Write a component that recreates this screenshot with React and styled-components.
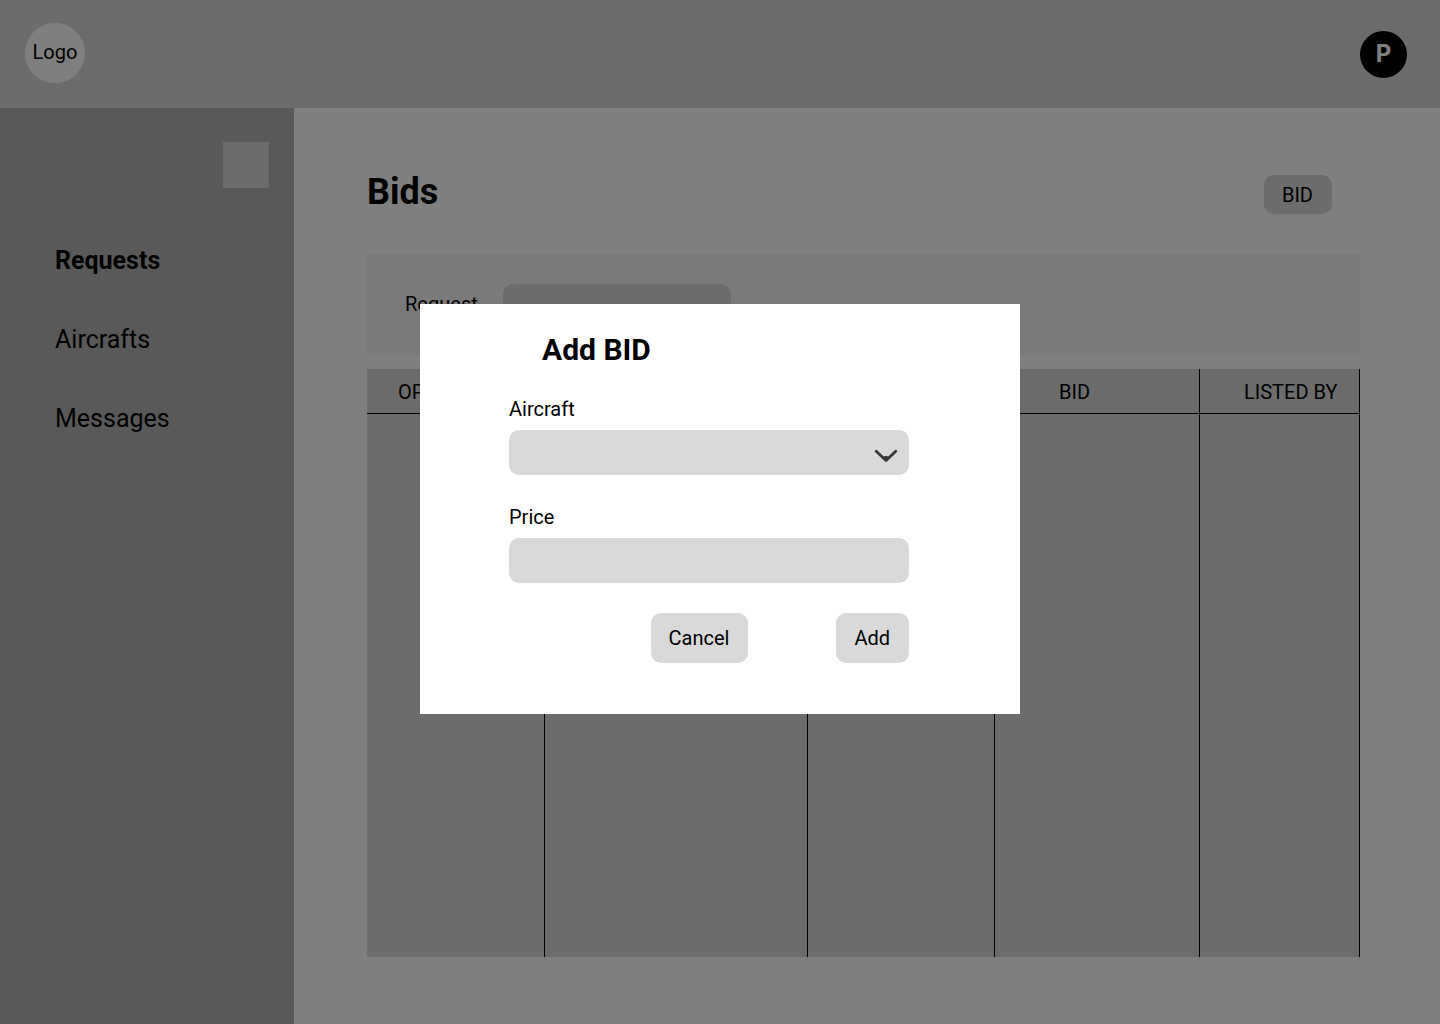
import React from "react";
import styled, { createGlobalStyle } from "styled-components";

const Global = createGlobalStyle`
  *, *::before, *::after { box-sizing: border-box; }
  body { margin: 0; background: #fff; color: #000; font: 20px/24px Roboto, "Liberation Sans", sans-serif; }
  button, input, select { font: inherit; color: inherit; }
`;

const Page = styled.div`
  min-height: 100vh;
  display: flex;
  flex-direction: column;
`;

const Header = styled.header`
  height: 108px;
  flex: none;
  display: flex;
  align-items: center;
  justify-content: space-between;
  padding: 0 33px 0 25px;
  background: #d9d9d9;
`;

const Logo = styled.a`
  display: grid;
  place-items: center;
  width: 60px;
  height: 60px;
  margin-bottom: 2px;
  padding-bottom: 2px;
  border-radius: 50%;
  background: #fff;
  color: inherit;
  text-decoration: none;
`;

const Avatar = styled.button`
  width: 47px;
  height: 47px;
  padding: 0;
  border: 0;
  border-radius: 50%;
  background: #000;
  && { color: #fff; font: 700 24px/28px Inter, sans-serif; }
`;

const Body = styled.div`
  flex: 1;
  display: flex;
`;

const Sidebar = styled.aside`
  flex: none;
  width: 294px;
  display: flex;
  flex-direction: column;
  padding: 34px 25px;
  background: #b3b3b3;
`;

const Toggle = styled.button`
  align-self: flex-end;
  width: 46px;
  height: 46px;
  padding: 0;
  border: 0;
  background: #d9d9d9;
`;

const Nav = styled.nav`
  display: flex;
  flex-direction: column;
  gap: 49px;
  padding: 58px 30px 0;
`;

const NavLink = styled.a`
  color: inherit;
  text-decoration: none;
  font-size: 25px;
  line-height: 30px;
  font-weight: ${(p) => (p.$active ? 700 : 400)};
`;

const Main = styled.main`
  flex: 1;
  min-width: 0;
  display: flex;
  flex-direction: column;
  padding: 63px 80px 67px 73px;
`;

const TitleRow = styled.div`
  display: flex;
  align-items: flex-end;
  justify-content: space-between;
  padding-right: 28px;
  margin-bottom: 40px;
`;

const PageTitle = styled.h1`
  margin: 0;
  font-size: 36px;
  line-height: 43px;
`;

const Button = styled.button`
  height: ${(p) => (p.$large ? 50 : 39)}px;
  padding: 0 19px 0 18px;
  border: 0;
  border-radius: 10px;
  background: #d9d9d9;
`;

const Label = styled.label`
  padding-bottom: 2px;
`;

const Filters = styled.section`
  display: flex;
  align-items: center;
  gap: 25px;
  height: 101px;
  margin-bottom: 14px;
  padding: 0 38px;
  background: #f4f4f4;
`;

const FilterInput = styled.input`
  width: 228px;
  height: 41px;
  padding: 0 12px;
  border: 0;
  border-radius: 10px;
  background: #d9d9d9;
`;

const Table = styled.table`
  flex: 1;
  display: grid;
  grid-template-columns: 178fr 263fr 187fr 205fr 160fr;
  grid-template-rows: 45px 1fr;
  background: #d9d9d9;

  thead, tbody, tr { display: contents; }
`;

const HeadCell = styled.th`
  padding: 11px 0 0 ${(p) => p.$indent}px;
  border-bottom: 1px solid #000;
  border-right: 1px solid #000;
  font-weight: 400;
  text-align: left;
  white-space: nowrap;
`;

const Cell = styled.td`
  padding: 0;
  border-right: 1px solid #000;
`;

const Overlay = styled.div`
  position: fixed;
  inset: 0;
  display: grid;
  place-items: center;
  padding-bottom: 6px;
  background: rgba(0, 0, 0, 0.5);
`;

const Dialog = styled.form`
  width: 600px;
  padding: 28px 111px 51px 89px;
  background: #fff;
`;

const DialogTitle = styled.h2`
  margin: 0 0 29px;
  padding-left: 33px;
  font-size: 30px;
  line-height: 36px;
`;

const Field = styled.div`
  position: relative;
  display: flex;
  flex-direction: column;
  gap: 7px;
  margin-bottom: 30px;
`;

const TextInput = styled.input`
  width: 100%;
  height: 45px;
  padding: 0 12px;
  border: 0;
  border-radius: 10px;
  background: #d9d9d9;
`;

const Select = styled(TextInput)`
  appearance: none;
`;

const Chevron = styled.svg`
  position: absolute;
  right: 11px;
  bottom: 11px;
  width: 24px;
  height: 16px;
  pointer-events: none;
`;

const Actions = styled.div`
  display: flex;
  justify-content: flex-end;
  gap: 88px;
`;

const links = ["Requests", "Aircrafts", "Messages"];
const columns = [
  { name: "OPERATOR", indent: 31 },
  { name: "AIRCRAFT", indent: 65 },
  { name: "PRICE", indent: 65 },
  { name: "BID", indent: 64 },
  { name: "LISTED BY", indent: 44 },
];

export default function App() {
  return (
    <>
      <Global />
      <Page>
        <Header>
          <Logo href="#">Logo</Logo>
          <Avatar type="button">P</Avatar>
        </Header>
        <Body>
          <Sidebar>
            <Toggle type="button" aria-label="Toggle menu" />
            <Nav>
              {links.map((name, i) => (
                <NavLink key={name} href="#" $active={i === 0}>{name}</NavLink>
              ))}
            </Nav>
          </Sidebar>
          <Main>
            <TitleRow>
              <PageTitle>Bids</PageTitle>
              <Button type="button">BID</Button>
            </TitleRow>
            <Filters>
              <Label htmlFor="request">Request</Label>
              <FilterInput id="request" />
            </Filters>
            <Table>
              <thead>
                <tr>
                  {columns.map((c) => (
                    <HeadCell key={c.name} $indent={c.indent}>{c.name}</HeadCell>
                  ))}
                </tr>
              </thead>
              <tbody>
                <tr>
                  {columns.map((c) => <Cell key={c.name} />)}
                </tr>
              </tbody>
            </Table>
          </Main>
        </Body>
      </Page>
      <Overlay>
        <Dialog role="dialog" aria-modal="true" aria-labelledby="dialog-title">
          <DialogTitle id="dialog-title">Add BID</DialogTitle>
          <Field>
            <Label htmlFor="aircraft">Aircraft</Label>
            <Select as="select" id="aircraft" />
            <Chevron viewBox="0 0 24 16" fill="none" aria-hidden="true">
              <path d="M2.2 3.2 12 12.6 21.8 3.2" stroke="#3a3638" strokeWidth="2.8" strokeLinecap="round" strokeLinejoin="round" />
              <circle cx="12" cy="10.2" r="2.4" fill="#3a3638" />
            </Chevron>
          </Field>
          <Field>
            <Label htmlFor="price">Price</Label>
            <TextInput id="price" />
          </Field>
          <Actions>
            <Button type="button" $large>Cancel</Button>
            <Button type="button" $large>Add</Button>
          </Actions>
        </Dialog>
      </Overlay>
    </>
  );
}
